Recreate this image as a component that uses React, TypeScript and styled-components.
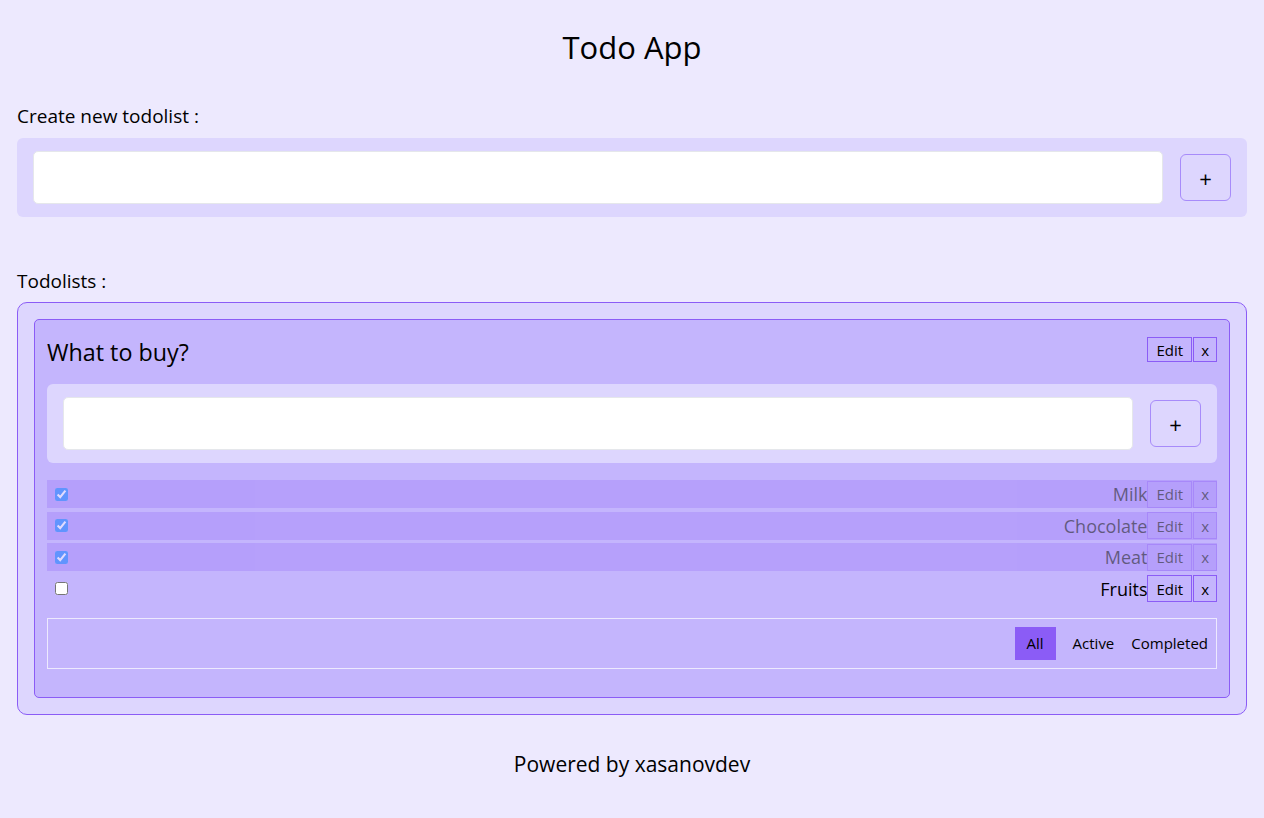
import React, { useState } from "react";
import styled, { createGlobalStyle } from "styled-components";

const Global = createGlobalStyle`
  html, body { margin: 0; padding: 0; }
  body {
    background: #ede9fe;
    font-family: "Open Sans", "Noto Sans", sans-serif;
    color: #000;
  }
  * { box-sizing: border-box; }
`;

const Page = styled.div`
  padding: 0 17px;
  min-height: 818px;
`;

const Title = styled.h1`
  margin: 0;
  height: 93px;
  display: flex;
  align-items: center;
  justify-content: center;
  font-size: 31px;
  font-weight: 400;
`;

const Label = styled.div`
  font-size: 19px;
  line-height: 24px;
  padding-top: 11px;
  height: 35px;
`;

const FormBox = styled.div<{ $flush?: boolean }>`
  display: flex;
  align-items: center;
  gap: 17px;
  background: #ddd6fe;
  border-radius: 6px;
  padding: 13px 16px;
  margin-top: ${(p) => (p.$flush ? 0 : 10)}px;
`;

const Input = styled.input`
  flex: 1;
  height: 53px;
  border: 1px solid #e5e7eb;
  border-radius: 5px;
  background: #fff;
  outline: none;
  font-size: 18px;
  padding: 0 12px;
`;

const PlusButton = styled.button`
  width: 51px;
  height: 47px;
  border: 1px solid #a78bfa;
  border-radius: 6px;
  background: transparent;
  font-size: 22px;
  font-family: inherit;
  color: #000;
  display: flex;
  align-items: center;
  justify-content: center;
  padding: 0;
  cursor: pointer;
`;

const ListsLabel = styled(Label)`
  margin-top: 41px;
`;

const Container = styled.div`
  margin-top: 9px;
  border: 1px solid #8b5cf6;
  border-radius: 10px;
  background: #ddd6fe;
  padding: 16px;
`;

const Card = styled.div`
  border: 1px solid #8b5cf6;
  border-radius: 5px;
  background: #c4b5fd;
  padding: 16px 12px 28px;
`;

const CardHeader = styled.div`
  display: flex;
  align-items: flex-start;
  justify-content: space-between;
  height: 32px;
  margin-bottom: 16px;
`;

const CardTitle = styled.h2`
  margin: 0;
  font-size: 23.3px;
  line-height: 32px;
  font-weight: 400;
`;

const ButtonGroup = styled.div<{ $offset?: number }>`
  display: flex;
  gap: 1px;
  margin-top: ${(p) => p.$offset ?? 0}px;
`;

const SmallButton = styled.button<{ $h?: number; $narrow?: boolean }>`
  height: ${(p) => p.$h ?? 25}px;
  border: 1px solid #8b5cf6;
  background: transparent;
  font-family: inherit;
  font-size: 15px;
  color: #000;
  padding: 0 ${(p) => (p.$narrow ? 7 : 8)}px;
  cursor: pointer;
  display: flex;
  align-items: center;
`;

const Tasks = styled.div`
  display: flex;
  flex-direction: column;
  gap: 3.5px;
  margin-top: 17px;
`;

const TaskRow = styled.div<{ $done: boolean }>`
  display: flex;
  align-items: center;
  height: 28px;
  background: ${(p) => (p.$done ? "#a78bfa" : "transparent")};
  opacity: ${(p) => (p.$done ? 0.5 : 1)};
`;

const Check = styled.input`
  margin: 0 0 0 8px;
  width: 13px;
  height: 13px;
`;

const TaskText = styled.span`
  flex: 1;
  text-align: right;
  font-size: 18px;
`;

const FilterBox = styled.div`
  margin-top: 15px;
  height: 51px;
  border: 1px solid #ede9fe;
  display: flex;
  align-items: center;
  justify-content: flex-end;
  gap: 17px;
  padding-right: 8px;
`;

const FilterButton = styled.button<{ $active: boolean }>`
  height: 33px;
  border: none;
  background: ${(p) => (p.$active ? "#8b5cf6" : "transparent")};
  padding: 0 ${(p) => (p.$active ? 12 : 0)}px;
  font-family: inherit;
  font-size: 15px;
  color: #000;
  cursor: pointer;
`;

const Footer = styled.footer`
  text-align: center;
  font-size: 21px;
  margin-top: 35px;
`;

type Task = { id: number; title: string; done: boolean };

export default function App() {
  const [tasks, setTasks] = useState<Task[]>([
    { id: 1, title: "Milk", done: true },
    { id: 2, title: "Chocolate", done: true },
    { id: 3, title: "Meat", done: true },
    { id: 4, title: "Fruits", done: false },
  ]);
  const toggle = (id: number) =>
    setTasks((t) => t.map((x) => (x.id === id ? { ...x, done: !x.done } : x)));

  return (
    <Page>
      <Global />
      <Title>Todo App</Title>
      <Label>Create new todolist :</Label>
      <FormBox>
        <Input />
        <PlusButton>+</PlusButton>
      </FormBox>
      <ListsLabel>Todolists :</ListsLabel>
      <Container>
        <Card>
          <CardHeader>
            <CardTitle>What to buy?</CardTitle>
            <ButtonGroup $offset={1}>
              <SmallButton>Edit</SmallButton>
              <SmallButton $narrow>x</SmallButton>
            </ButtonGroup>
          </CardHeader>
          <FormBox $flush>
            <Input />
            <PlusButton>+</PlusButton>
          </FormBox>
          <Tasks>
            {tasks.map((t) => (
              <TaskRow key={t.id} $done={t.done}>
                <Check type="checkbox" checked={t.done} onChange={() => toggle(t.id)} />
                <TaskText>{t.title}</TaskText>
                <ButtonGroup>
                  <SmallButton $h={27}>Edit</SmallButton>
                  <SmallButton $h={27} $narrow>x</SmallButton>
                </ButtonGroup>
              </TaskRow>
            ))}
          </Tasks>
          <FilterBox>
            <FilterButton $active>All</FilterButton>
            <FilterButton $active={false}>Active</FilterButton>
            <FilterButton $active={false}>Completed</FilterButton>
          </FilterBox>
        </Card>
      </Container>
      <Footer>Powered by xasanovdev</Footer>
    </Page>
  );
}
